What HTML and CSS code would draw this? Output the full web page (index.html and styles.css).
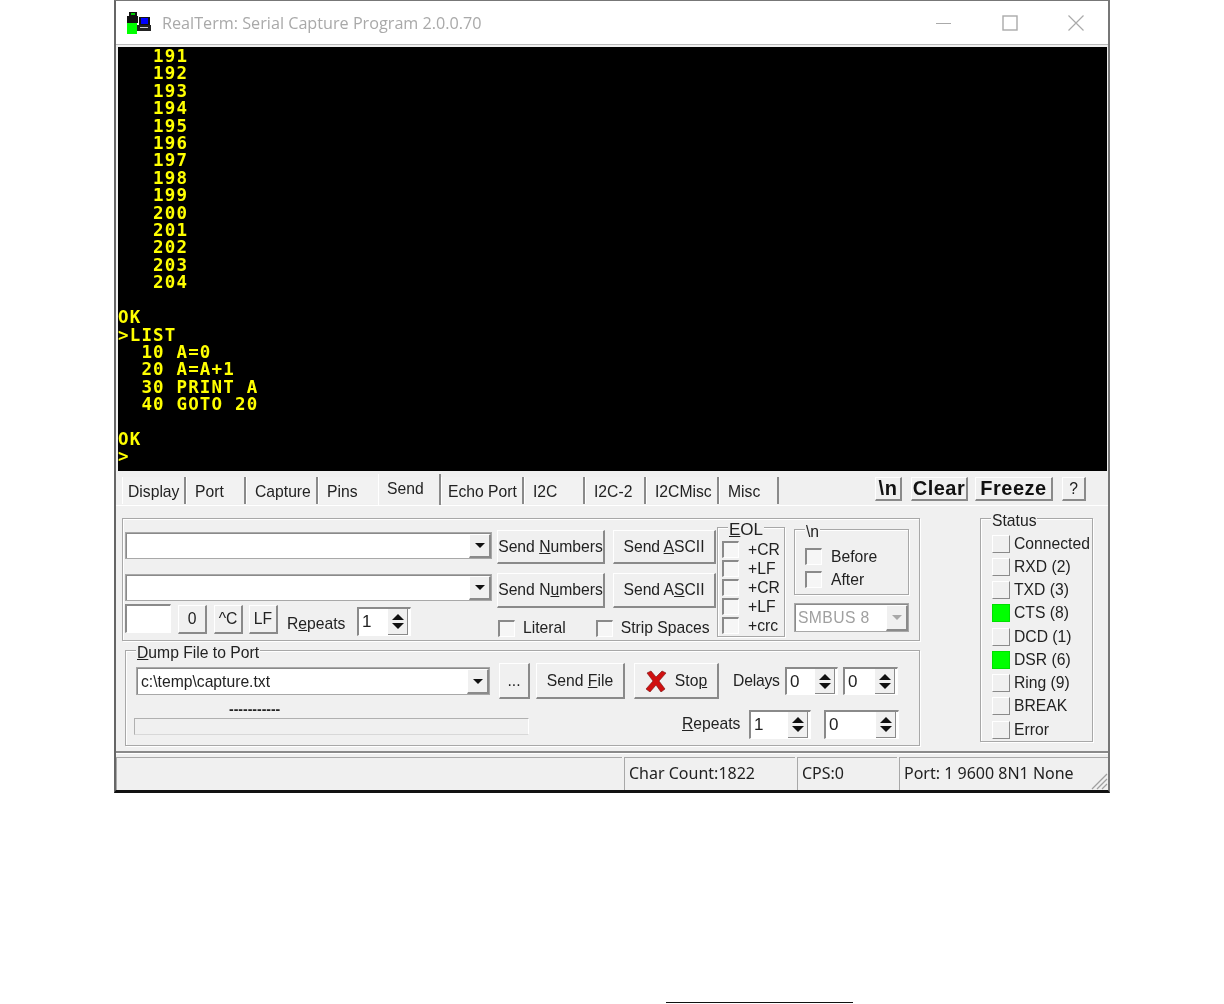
FILE: index.html
```html
<!doctype html>
<html>
<head>
  <meta charset="utf-8">
  <title>RealTerm: Serial Capture Program 2.0.0.70</title>
  <link rel="stylesheet" href="styles.css">
</head>
<body>

<div class="window">
  <div class="titlebar">
    <svg class="app-icon" width="24" height="22" viewBox="0 0 24 22">
      <rect x="2" y="0" width="8" height="4" fill="#111"/>
      <rect x="4" y="1" width="4" height="2" fill="#0c0"/>
      <rect x="0" y="4" width="11" height="7" fill="#111"/>
      <rect x="0" y="11" width="10" height="11" fill="#0f0"/>
      <rect x="12" y="5" width="11" height="9" fill="#111"/>
      <rect x="14" y="6" width="7" height="6" fill="#00f"/>
      <rect x="10" y="13" width="14" height="6" fill="#222"/>
      <rect x="13" y="15" width="8" height="1" fill="#ccc"/>
    </svg>
    <span class="title-text">RealTerm: Serial Capture Program 2.0.0.70</span>
    <div class="window-btns">
      <svg width="16" height="16" viewBox="0 0 16 16"><path d="M0 8.5H15" stroke="#aaa" fill="none"/></svg>
      <svg width="16" height="16" viewBox="0 0 16 16"><rect x="1" y="1" width="14" height="14" stroke="#aaa" stroke-width="1.4" fill="none"/></svg>
      <svg width="16" height="16" viewBox="0 0 16 16"><path d="M0.5 0.5L15.5 15.5M15.5 0.5L0.5 15.5" stroke="#aaa" stroke-width="1.2" fill="none"/></svg>
    </div>
  </div>

  <pre class="terminal">   191
   192
   193
   194
   195
   196
   197
   198
   199
   200
   201
   202
   203
   204

OK
&gt;LIST
  10 A=0
  20 A=A+1
  30 PRINT A
  40 GOTO 20

OK
&gt;</pre>

  <div class="tabs">
    <div class="tab w64 first">Display</div>
    <div class="tab w60">Port</div>
    <div class="tab w72">Capture</div>
    <div class="tab w60 pins">Pins</div>
    <div class="tab w63 selected">Send</div>
    <div class="tab w83 echo">Echo Port</div>
    <div class="tab w61">I2C</div>
    <div class="tab w61">I2C-2</div>
    <div class="tab w73">I2CMisc</div>
    <div class="tab w60">Misc</div>
    <div class="tab-btns">
      <div class="btn bold b-n">\n</div>
      <div class="btn bold b-clear">Clear</div>
      <div class="btn bold b-freeze">Freeze</div>
      <div class="btn b-help">?</div>
    </div>
  </div>

  <div class="panels">
    <div class="left-col">
      <div class="group send-group">
        <div class="send-combos">
          <div class="combo"><div class="arrow"></div></div>
          <div class="combo second"><div class="arrow"></div></div>
          <div class="send-row3">
            <div class="field small"></div>
            <div class="btn sq">0</div>
            <div class="btn sq">^C</div>
            <div class="btn sq lf">LF</div>
            <span class="repeats-label">R<u>e</u>peats</span>
            <div class="spin w54"><span>1</span><div class="spin-btn"><i class="up"></i><i class="down"></i></div></div>
          </div>
        </div>

        <div class="send-buttons">
          <div class="btn-row">
            <div class="btn send-num"><span>Send <u>N</u>umbers</span></div>
            <div class="btn send-ascii"><span>Send <u>A</u>SCII</span></div>
          </div>
          <div class="btn-row second">
            <div class="btn send-num"><span>Send N<u>u</u>mbers</span></div>
            <div class="btn send-ascii"><span>Send A<u>S</u>CII</span></div>
          </div>
          <div class="check-row">
            <div class="check"></div><span class="lit">Literal</span>
            <div class="check strip"></div><span class="lit">Strip Spaces</span>
          </div>
        </div>

        <div class="group eol">
          <span class="legend big"><u>E</u>OL</span>
          <div class="eol-row"><div class="check"></div><span>+CR</span></div>
          <div class="eol-row"><div class="check"></div><span>+LF</span></div>
          <div class="eol-row"><div class="check"></div><span>+CR</span></div>
          <div class="eol-row"><div class="check"></div><span>+LF</span></div>
          <div class="eol-row"><div class="check"></div><span>+crc</span></div>
        </div>

        <div class="nl-col">
          <div class="group nl">
            <span class="legend">\n</span>
            <div class="nl-row"><div class="check"></div><span>Before</span></div>
            <div class="nl-row"><div class="check"></div><span>After</span></div>
          </div>
          <div class="combo smbus"><span>SMBUS 8</span><div class="arrow off"></div></div>
        </div>
      </div>

      <div class="group dump-group">
        <span class="legend"><u>D</u>ump File to Port</span>
        <div class="dump-row1">
          <div class="combo file"><span>c:\temp\capture.txt</span><div class="arrow"></div></div>
          <div class="btn dots">...</div>
          <div class="btn send-file"><span>Send <u>F</u>ile</span></div>
          <div class="btn stop">
            <svg width="22" height="22" viewBox="0 0 22 22"><path d="M2 3L6 1L11 7L17 1L21 3L14 11L20 19L16 22L11 15L5 22L1 19L8 11Z" fill="#d01010" stroke="#701010" stroke-width=".6"/></svg>
            <span>Sto<u>p</u></span>
          </div>
          <span class="delays">Delays</span>
          <div class="spin w53"><span>0</span><div class="spin-btn"><i class="up"></i><i class="down"></i></div></div>
          <div class="spin w55"><span>0</span><div class="spin-btn"><i class="up"></i><i class="down"></i></div></div>
        </div>
        <div class="dump-row2">
          <div class="progress-col">
            <div class="dashes">-----------</div>
            <div class="progress"></div>
          </div>
          <div class="dump-repeats">
            <span class="rep2"><u>R</u>epeats</span>
            <div class="spin w62"><span>1</span><div class="spin-btn"><i class="up"></i><i class="down"></i></div></div>
            <div class="spin w75"><span>0</span><div class="spin-btn"><i class="up"></i><i class="down"></i></div></div>
          </div>
        </div>
      </div>
    </div>

    <div class="group status-group">
      <span class="legend">Status</span>
      <div class="status-row"><div class="led"></div>Connected</div>
      <div class="status-row"><div class="led"></div>RXD (2)</div>
      <div class="status-row"><div class="led"></div>TXD (3)</div>
      <div class="status-row"><div class="led on"></div>CTS (8)</div>
      <div class="status-row"><div class="led"></div>DCD (1)</div>
      <div class="status-row"><div class="led on"></div>DSR (6)</div>
      <div class="status-row"><div class="led"></div>Ring (9)</div>
      <div class="status-row"><div class="led"></div>BREAK</div>
      <div class="status-row"><div class="led"></div>Error</div>
    </div>
  </div>

  <div class="statusbar">
    <div class="sb-panel sb-first"></div>
    <div class="sb-panel sb-count">Char Count:1822</div>
    <div class="sb-panel sb-cps">CPS:0</div>
    <div class="sb-panel sb-port">Port: 1 9600 8N1 None
      <svg class="grip" width="20" height="20" viewBox="0 0 20 20"><path d="M19 4L4 19M19 9L9 19M19 14L14 19" stroke="#a0a0a0" stroke-width="1.3" fill="none"/></svg>
    </div>
  </div>
</div>

<div class="stray-line"></div>

</body>
</html>
```

FILE: styles.css
```css
* {
  box-sizing: border-box;
}

body {
  margin: 0;
  background-color: white;
  font-family: "Liberation Sans", sans-serif;
  font-size: 15.7px;
  color: #222;
}

/* the reference is an upscaled capture, so everything is a little soft */
.window {
  width: 996px;
  height: 793px;
  margin-left: 114px;
  background-color: #f0f0f0;
  border-left: 2px solid #666;
  border-right: 2px solid #777;
  border-top: 1px solid #777;
  border-bottom: 3px solid #111;
  display: flex;
  flex-direction: column;
  filter: blur(.3px);
}

/* title bar */

.titlebar {
  height: 44px;
  flex: none;
  background-color: white;
  display: flex;
  align-items: center;
  padding-left: 11px;
  border-bottom: 1px solid #bbb;
}

.app-icon {
  flex: none;
  margin-right: 11px;
}

.title-text {
  font-family: "Open Sans", sans-serif;
  font-size: 16.2px;
  color: #a9a9a9;
}

.window-btns {
  margin-left: auto;
  margin-right: 24px;
  display: flex;
  gap: 50px;
}

/* terminal */

.terminal {
  flex: none;
  height: 424px;
  margin: 2px 1px 0 2px;
  padding: 1px 0 0;
  background-color: black;
  color: #ffff00;
  font-family: "DejaVu Sans Mono", monospace;
  font-weight: bold;
  font-size: 17.5px;
  letter-spacing: 1.16px;
  line-height: 17.4px;
}

/* tabs */

.tabs {
  flex: none;
  height: 35px;
  display: flex;
  padding-left: 6px;
  border-bottom: 1px solid white;
}

.tab {
  height: 27px;
  margin-top: 6px;
  padding: 6px 0 0 8px;
  border-right: 2px solid #8a8a8a;
  border-left: 1px solid white;
  background-color: #f2f2f2;
  white-space: nowrap;
}

.tab.first {
  padding-left: 5px;
}

.tab.echo {
  padding-left: 6px;
}

.tab.pins {
  border-right: none;
}

.tab.selected {
  height: 31px;
  margin-top: 3px;
  padding-top: 6px;
  background-color: #f0f0f0;
}

.w60 { width: 60px; }
.w61 { width: 61px; }
.w63 { width: 63px; }
.w64 { width: 64px; }
.w72 { width: 72px; }
.w73 { width: 73px; }
.w83 { width: 83px; }

.tab-btns {
  margin-left: auto;
  margin-right: 22px;
  margin-top: 6px;
  display: flex;
  align-items: flex-start;
}

.btn {
  flex: none;
  display: flex;
  align-items: center;
  justify-content: center;
  background-color: #f0f0f0;
  border-top: 1px solid white;
  border-left: 1px solid white;
  border-right: 2px solid #8a8a8a;
  border-bottom: 2px solid #8a8a8a;
  white-space: nowrap;
}

.btn.bold {
  font-weight: bold;
  font-size: 20px;
  letter-spacing: .5px;
  color: #111;
}

.b-n, .b-clear, .b-freeze, .b-help {
  height: 24px;
}

.b-n { width: 27px; margin-right: 9px; }
.b-clear { width: 57px; margin-right: 7px; }
.b-freeze { width: 78px; margin-right: 9px; }
.b-help { width: 24px; }

/* main area */

.panels {
  flex: none;
  height: 247px;
  display: flex;
  padding: 12px 0 0 6px;
  border-bottom: 2px solid #8a8a8a;
}

.left-col {
  width: 798px;
  flex: none;
}

.group {
  position: relative;
  border: 1px solid #a8a8a8;
  box-shadow: 1px 1px 0 white, inset 1px 1px 0 white;
}

.legend {
  position: absolute;
  top: -6px;
  left: 10px;
  padding: 0 1px;
  line-height: 16px;
  background-color: #f0f0f0;
}

.legend.big {
  font-size: 17px;
}

/* send group */

.send-group {
  height: 123px;
  display: flex;
}

.send-combos {
  width: 367px;
  margin-left: 2px;
  padding-top: 13px;
  flex: none;
}

.field, .combo, .spin {
  border-top: 2px solid #8a8a8a;
  border-left: 2px solid #8a8a8a;
  border-right: 1px solid white;
  border-bottom: 1px solid white;
  background-color: white;
}

.combo {
  height: 27px;
  display: flex;
  align-items: center;
  justify-content: flex-end;
  outline: 1px solid #a8a8a8;
  outline-offset: -1px;
}

.combo.second {
  margin-top: 15px;
}

.arrow {
  width: 22px;
  height: 100%;
  flex: none;
  display: flex;
  align-items: center;
  justify-content: center;
  background-color: #f0f0f0;
  border-right: 2px solid #8a8a8a;
  border-bottom: 2px solid #8a8a8a;
  border-left: 1px solid white;
  border-top: 1px solid white;
}

.arrow::after {
  content: "";
  border-left: 5px solid transparent;
  border-right: 5px solid transparent;
  border-top: 5px solid #111;
}

.arrow.off::after {
  border-top-color: #a8a8a8;
}

.send-row3 {
  display: flex;
  align-items: flex-start;
  margin-top: 3px;
}

.field.small {
  width: 46px;
  height: 29px;
}

.btn.sq {
  width: 29px;
  height: 29px;
  margin-left: 7px;
  margin-top: 1px;
}

.btn.lf {
  margin-left: 6px;
}

.repeats-label {
  width: 61px;
  margin: 10px 9px 0 9px;
  line-height: 20px;
  flex: none;
}

.spin {
  height: 29px;
  display: flex;
  align-items: center;
  justify-content: space-between;
  padding-left: 3px;
  font-size: 17px;
  flex: none;
}

.send-row3 .spin {
  margin-top: 3px;
}

.spin-btn {
  width: 20px;
  height: 100%;
  margin-right: 2px;
  padding: 2px 0;
  display: flex;
  flex-direction: column;
  align-items: center;
  justify-content: center;
  gap: 3px;
  background-color: #f0f0f0;
  border-right: 1px solid #8a8a8a;
  border-bottom: 1px solid #8a8a8a;
}

.spin-btn i {
  display: block;
  border-left: 6px solid transparent;
  border-right: 6px solid transparent;
}

.spin-btn .up {
  border-bottom: 6px solid #111;
}

.spin-btn .down {
  border-top: 6px solid #111;
}

.w53 { width: 53px; }
.w54 { width: 54px; }
.w55 { width: 55px; }
.w62 { width: 62px; }
.w75 { width: 75px; }

.send-buttons {
  width: 219px;
  margin-left: 5px;
  padding-top: 11px;
  flex: none;
}

.btn-row {
  display: flex;
  gap: 8px;
  height: 34px;
}

.btn-row.second {
  margin-top: 9px;
  height: 35px;
}

.send-num { width: 108px; }
.send-ascii { width: 103px; }

.check-row {
  display: flex;
  align-items: center;
  margin-top: 11px;
  height: 18px;
  margin-left: 1px;
}

.check {
  flex: none;
  width: 17px;
  height: 17px;
  background-color: #f6f6f6;
  border-top: 2px solid #8a8a8a;
  border-left: 2px solid #8a8a8a;
  border-right: 1px solid white;
  border-bottom: 1px solid white;
}

.lit {
  margin-left: 8px;
}

.check.strip {
  margin-left: 30px;
}

.eol {
  width: 68px;
  height: 110px;
  margin: 8px 0 0 1px;
  padding: 12px 0 0 4px;
  flex: none;
}

.eol-row {
  display: flex;
  align-items: center;
  height: 19px;
  gap: 9px;
}

.nl-col {
  width: 115px;
  margin: 10px 0 0 9px;
  flex: none;
}

.nl {
  height: 66px;
  padding: 15px 0 0 10px;
}

.nl-row {
  display: flex;
  align-items: center;
  height: 23px;
  gap: 9px;
}

.combo.smbus {
  height: 29px;
  margin-top: 8px;
  justify-content: space-between;
  padding-left: 2px;
  color: #a0a0a0;
  letter-spacing: .4px;
}

/* dump group */

.dump-group {
  width: 795px;
  height: 96px;
  margin: 9px 0 0 3px;
}

.dump-row1 {
  display: flex;
  align-items: center;
  padding: 12px 0 0 10px;
}

.combo.file {
  width: 354px;
  height: 28px;
  justify-content: space-between;
  padding-left: 3px;
}

.btn.dots {
  width: 31px;
  height: 36px;
  margin-left: 9px;
}

.btn.send-file {
  width: 89px;
  height: 36px;
  margin-left: 6px;
}

.btn.stop {
  width: 85px;
  height: 36px;
  margin-left: 9px;
  gap: 8px;
}

.delays {
  margin: 0 5px 0 14px;
  width: 47px;
  letter-spacing: -.2px;
}

.dump-row1 .spin {
  height: 28px;
}

.dump-row1 .spin + .spin {
  margin-left: 5px;
}

.dump-row2 {
  display: flex;
  margin-left: 8px;
}

.progress-col {
  width: 395px;
  flex: none;
}

.dashes {
  padding: 3px 0 0 95px;
  height: 19px;
  line-height: 14px;
  font-size: 14px;
  font-weight: bold;
}

.progress {
  height: 17px;
  border: 1px solid #b0b0b0;
  border-right-color: white;
  border-bottom-color: #d8d8d8;
}

.dump-repeats {
  display: flex;
  align-items: center;
  margin-left: 153px;
  padding-top: 11px;
  height: 39px;
}

.rep2 {
  width: 67px;
  flex: none;
}

.dump-repeats .spin + .spin {
  margin-left: 13px;
}

/* status */

.status-group {
  width: 113px;
  height: 224px;
  margin-left: 60px;
  padding: 13px 0 0 11px;
  flex: none;
}

.status-row {
  display: flex;
  align-items: center;
  height: 23.25px;
  gap: 4px;
  white-space: nowrap;
}

.led {
  flex: none;
  width: 18px;
  height: 18px;
  background-color: #f0f0f0;
  border-right: 1px solid #8a8a8a;
  border-bottom: 1px solid #8a8a8a;
  border-top: 1px solid white;
  border-left: 1px solid white;
}

.led.on {
  background-color: #00ff00;
  border-color: #00e000;
}

/* bottom status bar */

.statusbar {
  flex: 1;
  display: flex;
  gap: 2px;
  padding-top: 3px;
  border-top: 1px solid white;
}

.sb-panel {
  position: relative;
  border-top: 1px solid #a8a8a8;
  border-left: 1px solid #a8a8a8;
  padding: 5px 0 0 4px;
  font-family: "Noto Sans", sans-serif;
  font-size: 16px;
  white-space: nowrap;
  line-height: 20px;
}

.sb-first { width: 506px; }
.sb-count { width: 171px; }
.sb-cps { width: 100px; }
.sb-port { flex: 1; }

.grip {
  position: absolute;
  right: 0;
  bottom: 0;
}

.stray-line {
  width: 187px;
  height: 1px;
  margin: 209px 0 0 666px;
  background-color: #111;
}
```
